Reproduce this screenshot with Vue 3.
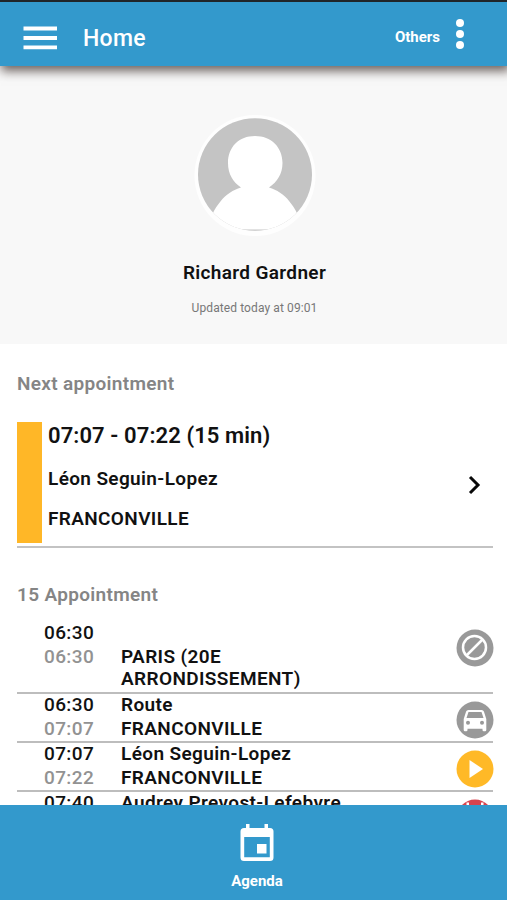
<script setup>
const rows = [
  { start: '06:30', end: '06:30', title: '', place: 'PARIS (20E ARRONDISSEMENT)', icon: 'blocked' },
  { start: '06:30', end: '07:07', title: 'Route', place: 'FRANCONVILLE', icon: 'car' },
  { start: '07:07', end: '07:22', title: 'Léon Seguin-Lopez', place: 'FRANCONVILLE', icon: 'play' },
  { start: '07:40', end: '', title: 'Audrey Prevost-Lefebvre', place: '', icon: 'date' },
]
</script>

<template>
  <div class="screen">
    <header class="bar">
      <svg class="menu" width="34" height="24" viewBox="0 0 34 24">
        <path d="M.5 2.5H34M.5 12H34M.5 21.3H34" stroke="#fff" stroke-width="3.8" />
      </svg>
      <h1>Home</h1>
      <span class="others">Others</span>
      <svg class="dots" width="10" height="32" viewBox="0 0 10 32" fill="#fff">
        <circle cx="5" cy="5" r="4" /><circle cx="5" cy="16" r="4" /><circle cx="5" cy="27" r="4" />
      </svg>
    </header>

    <main>
      <section class="profile">
        <svg class="avatar" width="122" height="122" viewBox="0 0 122 122">
          <defs><clipPath id="face"><ellipse cx="61" cy="59.500" rx="57" ry="56.300" /></clipPath></defs>
          <circle cx="61" cy="60.500" r="60.500" fill="#fefefe" />
          <g clip-path="url(#face)">
            <rect width="122" height="122" fill="#c4c4c4" />
            <path d="M12 114.600C20 91 31 77 47 72.500C39 67 34 59 34 48C34 32 45 21 61 21S88.500 32 88.500 48C88.500 59 83 67 75 72.500C91 77 102 91 110 114.600Z" fill="#fff" />
          </g>
        </svg>
        <h2>Richard Gardner</h2>
        <p>Updated today at 09:01</p>
      </section>

      <section class="next">
        <h3>Next appointment</h3>
        <div class="card">
          <div class="stripe"></div>
          <div class="details">
            <div class="time">07:07 - 07:22 (15 min)</div>
            <div class="who">Léon Seguin-Lopez</div>
            <div class="where">FRANCONVILLE</div>
          </div>
          <svg class="chevron" width="14" height="20" viewBox="0 0 14 20">
            <path d="M2 2L10 10L2 18" fill="none" stroke="#080808" stroke-width="3" />
          </svg>
        </div>
      </section>

      <section class="list">
        <h3>15 Appointment</h3>
        <div v-for="(row, i) in rows" :key="i" class="row">
          <div class="times">
            <span>{{ row.start }}</span>
            <span class="end">{{ row.end }}</span>
          </div>
          <div class="text">
            <span>{{ row.title }}</span>
            <span class="place">{{ row.place }}</span>
          </div>
          <svg class="badge" width="38" height="38" viewBox="0 0 38 38">
            <template v-if="row.icon === 'blocked'">
              <circle cx="19" cy="19" r="18.500" fill="#999" />
              <circle cx="18.500" cy="18.500" r="11.500" fill="none" stroke="#fff" stroke-width="2.500" />
              <path d="M10.500 26.500L26.500 10.500" stroke="#fff" stroke-width="2.500" />
            </template>
            <template v-else-if="row.icon === 'car'">
              <circle cx="19" cy="19" r="18.500" fill="#999" />
              <path fill="#fff" fill-rule="evenodd" d="M12.300 9H25.700Q27.300 9 27.900 10.600L30.300 18V29Q30.300 30.300 29 30.300H27.800Q26.500 30.300 26.500 29V27.800H11.500V29Q11.500 30.300 10.200 30.300H9Q7.700 30.300 7.700 29V18L10.100 10.600Q10.700 9 12.300 9ZM12.500 11L10.500 17H27.500L25.500 11ZM12 19.800A2 2 0 1 0 12 23.800A2 2 0 1 0 12 19.800ZM26 19.800A2 2 0 1 0 26 23.800A2 2 0 1 0 26 19.800Z" />
            </template>
            <template v-else-if="row.icon === 'play'">
              <circle cx="19" cy="19" r="18.500" fill="#ffb927" />
              <path d="M13.500 10V28L27 19Z" fill="#fff" />
            </template>
            <template v-else>
              <circle cx="19" cy="19" r="18.500" fill="#d8434e" />
              <path d="M10.500 3.500H13V6.500H25V3.500H27.500V6.500H30V29H8V6.500H10.500Z" fill="#fff" />
            </template>
          </svg>
        </div>
      </section>
    </main>

    <footer>
      <svg width="34" height="38" viewBox="0 0 34 38">
        <path fill="#fff" fill-rule="evenodd" d="M6 0H9.500V4H24.500V0H28V4H30Q33.500 4 33.500 7.500V33.500Q33.500 37 30 37H4Q.5 37 .5 33.500V7.500Q.5 4 4 4H6ZM4.200 13V33.200H29.800V13Z" />
        <rect x="17" y="20" width="9.500" height="9.500" fill="#fff" />
      </svg>
      <span>Agenda</span>
    </footer>
  </div>
</template>

<style>
body { margin: 0; overflow: hidden; }
</style>

<style scoped>
.screen {
  width: 507px; height: 900px; overflow: hidden; display: flex; flex-direction: column;
  background: #fff; color: #111; font-family: Roboto, sans-serif; font-weight: 600;
}
h1, h2, h3, p { margin: 0; font-weight: 600; }
.bar {
  box-sizing: border-box; flex: none; height: 66px; border-top: 2px solid #202529; background: #3399cc;
  display: flex; align-items: flex-start; padding: 0 42px 0 23px; color: #fff;
  position: relative; z-index: 1; box-shadow: 2px 4px 10px 1px rgba(30, 15, 10, .65);
}
.menu { margin-top: 24px; }
.bar h1 { margin: 22px 0 0 26px; font-size: 23px; line-height: 30px; letter-spacing: .3px; font-weight: 500; }
.others { margin: 25px 15px 0 auto; font-size: 15px; line-height: 20px; font-weight: 700; }
.dots { margin-top: 16px; }
main { flex: 1; min-height: 0; overflow: hidden; }
.profile {
  box-sizing: border-box; height: 278px; background: #f8f8f8; padding: 49px 0 0 2px;
  display: flex; flex-direction: column; align-items: center;
}
.avatar { flex: none; }
.profile h2 { margin-top: 24px; font-size: 19px; line-height: 24px; letter-spacing: .35px; }
.profile p { margin-top: 15px; font-size: 12px; line-height: 16px; font-weight: 400; color: #777; letter-spacing: .1px; }
.next, .list { padding: 0 14px 0 17px; }
h3 { font-size: 19px; line-height: 24px; letter-spacing: .32px; color: #858585; }
.next { padding-top: 28px; }
.card { margin-top: 26px; height: 124px; border-bottom: 2.500px solid #c3c3c3; display: flex; }
.stripe { width: 25px; height: 121px; background: #ffb727; }
.details { flex: 1; padding-left: 6px; font-size: 19px; line-height: 24px; letter-spacing: .36px; }
.time { font-size: 22px; line-height: 28px; letter-spacing: .1px; }
.who { margin-top: 17px; }
.where { margin-top: 16px; }
.chevron { margin: 53px 11px 0 0; }
.list { padding-top: 35px; }
.list h3 { margin-bottom: 15px; }
.row {
  display: flex; align-items: flex-start; border-bottom: 2px solid #bdbdbd;
  font-size: 19px; letter-spacing: .38px; line-height: 22px;
}
.row:nth-of-type(1) { padding-bottom: 1px; }
.times, .text { display: flex; flex-direction: column; gap: 3px; padding-bottom: 1px; }
.times { width: 77px; padding-left: 27px; font-weight: 500; }
.text { width: 230px; white-space: nowrap; }
.times span, .text span { min-height: 21px; line-height: 21px; }
.times .end, .text .place { min-height: 22px; line-height: 22px; white-space: normal; }
.times .end { color: #929292; }
.badge { margin: 7px -1px 0 auto; }
footer {
  flex: none; box-sizing: border-box; height: 95px; padding-top: 19px; background: #3399cc; color: #fff;
  display: flex; flex-direction: column; align-items: center; position: relative; z-index: 1;
}
footer svg { margin-left: 7px; }
footer span { margin: 9px 0 0 7px; font-size: 15px; line-height: 20px; font-weight: 700; }
</style>
